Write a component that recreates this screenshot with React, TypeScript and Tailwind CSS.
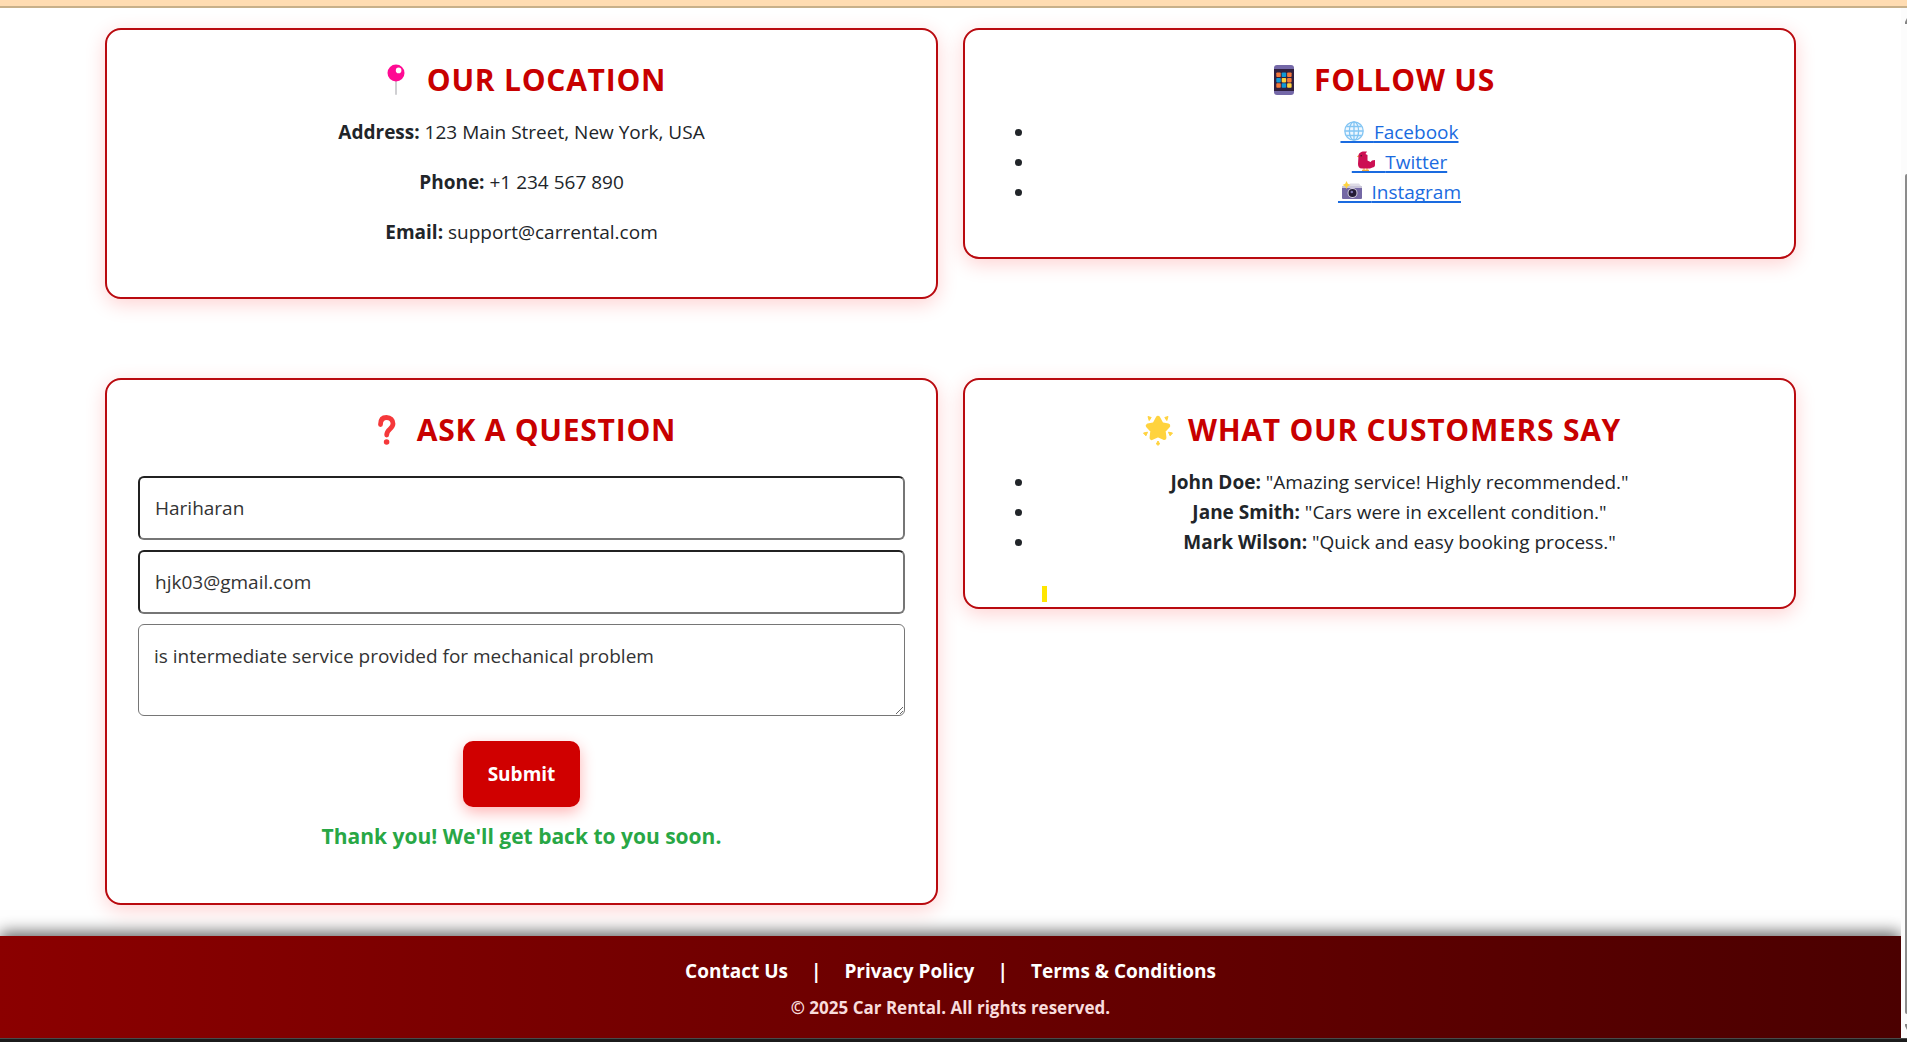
import { useState, type ReactNode } from "react";

function PinIcon() {
  return (
    <svg viewBox="0 0 32 32" className="size-8" aria-hidden="true">
      <rect x="14" y="15" width="2" height="16" rx="1" fill="#cfcfd2" />
      <circle cx="15" cy="9" r="8.5" fill="#ff0a93" />
      <circle cx="17.6" cy="6.4" r="2.8" fill="#fff" />
    </svg>
  );
}

const keys = ["#f5793a", "#0f9ad8", "#f5793a", "#0f9ad8", "#ffd23c", "#f5793a", "#f5793a", "#0f9ad8", "#ffd23c"];

function PhoneIcon() {
  return (
    <svg viewBox="0 0 32 32" className="size-8" aria-hidden="true">
      <rect x="6" y="1" width="20" height="30" rx="3" fill="#7468a8" />
      <rect x="6" y="5" width="20" height="22" fill="#30203f" />
      {keys.map((fill, i) => (
        <rect key={i} x={8.3 + (i % 3) * 5.4} y={8.5 + Math.floor(i / 3) * 5.4} width="4.5" height="4.5" rx="0.8" fill={fill} />
      ))}
    </svg>
  );
}

function QuestionIcon() {
  return (
    <svg viewBox="0 0 32 32" className="size-8" aria-hidden="true">
      <path d="M9.500 10.500C9.500 6 11.500 3.500 15.500 3.500s6.500 2.700 6.500 6.300c0 5.200-6.300 5.400-6.300 11.200" fill="none" stroke="#f5383a" strokeWidth="4.8" strokeLinecap="round" />
      <circle cx="15.6" cy="28" r="2.8" fill="#f5383a" />
    </svg>
  );
}

function StarIcon() {
  return (
    <svg viewBox="0 0 32 32" className="size-8" aria-hidden="true">
      <path d="M16 4l3.4 6.400 6.600 1.400-4.600 5 .8 7L16 21l-6.200 2.800.8-7-4.600-5 6.600-1.400z" fill="#ffd33e" stroke="#ffd33e" strokeWidth="4.500" strokeLinejoin="round" />
      <g fill="#ffd33e" stroke="#ffd33e" strokeWidth="1" strokeLinejoin="round">
        <path d="M6 2.5l3.2 1-2 3z" />
        <path d="M26 2.5l-3.2 1 2 3z" />
        <path d="M1.5 19l4-.8-1.6 3.6z" />
        <path d="M30.500 19l-4-.8 1.6 3.600z" />
        <path d="M16 27l1.600 3-1.600 1.300-1.600-1.300z" />
      </g>
    </svg>
  );
}

function GlobeIcon() {
  return (
    <svg viewBox="0 0 20 20" className="size-5" aria-hidden="true">
      <circle cx="10" cy="10" r="9.200" fill="#eef7ff" />
      <g fill="none" stroke="#83c5f3" strokeWidth="1.3">
        <circle cx="10" cy="10" r="9.200" />
        <ellipse cx="10" cy="10" rx="4.600" ry="9.200" />
        <path d="M10 1v18M1 10h18M2.500 5.500h15M2.500 14.500h15" />
      </g>
    </svg>
  );
}

function BirdIcon() {
  return (
    <svg viewBox="0 0 20 20" className="size-5" aria-hidden="true">
      <path d="M8 17v2.300M11 17v2.300M6 19.400h7" stroke="#f4a83a" strokeWidth="1.100" fill="none" />
      <path d="M3 4L.8 5.500 3 6.500z" fill="#f4a83a" />
      <path d="M2.500 5C2.500 2 5 .4 8 .4h3L9.500 3l2 1v5.500l3 1.500L16 9.500l3-.5v5c0 1.600-1 2.500-2.500 2.500L14 17.500H6c-3 0-4-2-4-4.500z" fill="#cc0f52" />
      <circle cx="5.200" cy="4.800" r=".8" fill="#4b1029" />
    </svg>
  );
}

function CameraIcon() {
  return (
    <svg viewBox="0 0 20 20" className="size-5" aria-hidden="true">
      <path d="M6 5l2-2.500h9L19 5z" fill="#dedbe6" />
      <rect x="0" y="5" width="20" height="13" rx="1" fill="#7468a5" />
      <rect x="0" y="5" width="20" height="2" fill="#c9c5d8" />
      <circle cx="10.500" cy="12" r="5" fill="#d5d0df" />
      <circle cx="10.500" cy="12" r="4" fill="#231b35" />
      <circle cx="9.800" cy="11" r="1.300" fill="#7f78b4" />
      <path d="M4.500 0l1.300 2.700L8.500 4 5.800 5.300 4.500 8 3.200 5.300.5 4l2.700-1.300z" fill="#ffd33e" />
    </svg>
  );
}

function Card({ icon, title, children }: { icon: ReactNode; title: string; children: ReactNode }) {
  return (
    <section className="rounded-2xl border-2 border-[#b90a0f] bg-white p-[30px] text-center shadow-[0_5px_20px_rgba(255,0,0,0.18)]">
      <h2 className="mb-[17px] flex items-center justify-center gap-2.5 text-[30px] leading-10 font-bold tracking-wide text-[#c80000] uppercase">
        <span className="flex w-10 justify-center">{icon}</span>
        {title}
      </h2>
      {children}
    </section>
  );
}

function SocialLink({ icon, label }: { icon: ReactNode; label: string }) {
  return (
    <a href="#" className="relative text-[#1a6be0] underline decoration-2 underline-offset-2 [text-decoration-skip-ink:none]">
      {"\u2003\u2002 "}
      {label}
      <span className="absolute top-0.5 left-1">{icon}</span>
    </a>
  );
}

const reviews = [
  ["John Doe:", "Amazing service! Highly recommended."],
  ["Jane Smith:", "Cars were in excellent condition."],
  ["Mark Wilson:", "Quick and easy booking process."],
];

const inputClass =
  "block h-16 w-full rounded-md border-2 border-t-[#212121] border-l-[#212121] border-r-[#767676] border-b-[#767676] bg-white px-[15px] text-[#333]";

export default function App() {
  const [name, setName] = useState("Hariharan");
  const [email, setEmail] = useState("hjk03@gmail.com");
  const [question, setQuestion] = useState("is intermediate service provided for mechanical problem");

  return (
    <div className="flex min-h-screen flex-col overflow-hidden bg-white font-['Open_Sans','Noto_Sans',sans-serif] text-[19px] leading-[30px] text-[#212529]">
      <div className="h-2 border-b-2 border-[#c8b08a] bg-[#ffdcb2]" />
      <div className="flex flex-1">
        <div className="flex min-w-0 flex-1 flex-col">
          <main className="flex-1 px-[105px] pt-5 pb-[30px]">
            <div className="grid grid-cols-2 items-start gap-x-[25px] gap-y-[79px]">
              <Card icon={<PinIcon />} title="Our Location">
                <p className="mb-5"><b>Address:</b> 123 Main Street, New York, USA</p>
                <p className="mb-5"><b>Phone:</b> +1 234 567 890</p>
                <p className="mb-5"><b>Email:</b> support@carrental.com</p>
              </Card>
              <Card icon={<PhoneIcon />} title="Follow Us">
                <ul className="mb-5 list-disc pl-10">
                  <li><SocialLink icon={<GlobeIcon />} label="Facebook" /></li>
                  <li><SocialLink icon={<BirdIcon />} label="Twitter" /></li>
                  <li><SocialLink icon={<CameraIcon />} label="Instagram" /></li>
                </ul>
              </Card>
              <Card icon={<QuestionIcon />} title="Ask a Question">
                <form className="mx-px mt-[26px] flex flex-col gap-2.5" onSubmit={(e) => e.preventDefault()}>
                  <input aria-label="Your name" className={inputClass} value={name} onChange={(e) => setName(e.target.value)} />
                  <input aria-label="Your email" type="email" className={inputClass} value={email} onChange={(e) => setEmail(e.target.value)} />
                  <textarea
                    aria-label="Your question"
                    className="block h-[92px] w-full resize rounded-md border border-[#767676] bg-white px-[15px] py-4 text-[#333]"
                    value={question}
                    onChange={(e) => setQuestion(e.target.value)}
                  />
                  <button type="submit" className="mt-[15px] self-center rounded-[10px] bg-[#d00000] px-[25px] py-[18px] font-bold text-white shadow-[0_5px_15px_rgba(255,0,0,0.3)]">
                    Submit
                  </button>
                </form>
                <p className="mt-[14px] mb-[22px] text-[21px] font-bold text-[#28a745]">Thank you! We'll get back to you soon.</p>
              </Card>
              <div className="relative">
                <Card icon={<StarIcon />} title="What Our Customers Say">
                  <ul className="mb-5 list-disc pl-10">
                    {reviews.map(([who, quote]) => (
                      <li key={who}><b>{who}</b> "{quote}"</li>
                    ))}
                  </ul>
                </Card>
                <span className="absolute bottom-[7px] left-[79px] h-4 w-[5px] bg-[#ffe600]" />
              </div>
            </div>
          </main>
          <footer className="bg-gradient-to-r from-[#8b0000] to-[#4b0000] pt-5 pb-4 text-center font-bold text-white shadow-[0_-4px_15px_rgba(0,0,0,0.6)]">
            <nav className="flex justify-center gap-[23px]">
              <a href="#">Contact Us</a>
              <span>|</span>
              <a href="#">Privacy Policy</a>
              <span>|</span>
              <a href="#">Terms &amp; Conditions</a>
            </nav>
            <p className="mt-2 text-[17px] leading-7 text-[#f8dcdc]">© 2025 Car Rental. All rights reserved.</p>
          </footer>
        </div>
        <div className="flex w-1.5 flex-col items-end bg-[#fcfcfc]" aria-hidden="true">
          <svg viewBox="0 0 2 6" className="mt-2.5 h-1.5 w-0.5"><path d="M2 0v6H0V4z" fill="#858585" /></svg>
          <div className="mt-[150px] mb-2.5 w-0.5 flex-1 rounded-l bg-[#8b8b8b]" />
          <svg viewBox="0 0 2 6" className="mb-2 h-1.5 w-0.5"><path d="M2 6V0H0v2z" fill="#858585" /></svg>
        </div>
      </div>
      <div className="h-1 border-t border-[#4a4a4a] bg-[#1b1b1b]" />
    </div>
  );
}
